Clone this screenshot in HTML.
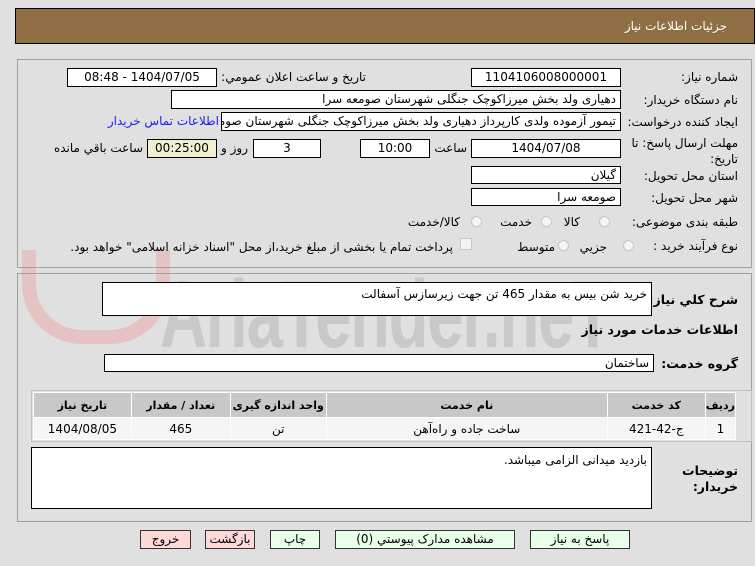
<!DOCTYPE html>
<html><head><meta charset="utf-8"><style>
body{margin:0;width:755px;height:566px;background:#e0e0e0;position:relative;overflow:hidden;font-family:"DejaVu Sans","Liberation Sans",sans-serif;font-size:12px;color:#000}
.a{position:absolute;white-space:nowrap}
.in{position:absolute;background:#fff;border:1px solid #000;box-sizing:border-box;direction:rtl;padding:0 4px;line-height:16px;overflow:hidden;white-space:nowrap}
.c{text-align:center}
.l{position:absolute;direction:rtl;white-space:nowrap}
.b{font-weight:bold;font-size:12.5px}
.panel{position:absolute;border:1px solid #a0a0a0;box-sizing:border-box}
.rad{position:absolute;width:11px;height:11px;border-radius:50%;border:1px solid #c8c8c8;background:#f4f4f4;box-sizing:border-box}
.btn{position:absolute;border:1px solid #333;box-sizing:border-box;text-align:center;line-height:17px;font-size:12px}
td{border:1px solid #fff;padding:0;text-align:center}
</style></head><body>
<div class="a" style="left:0;top:250px;width:755px;height:120px;overflow:hidden">
<div class="a" style="left:160px;top:10px;font-size:96px;line-height:110px;font-weight:bold;color:#c6c6c6;letter-spacing:-2px;font-family:'Liberation Sans',sans-serif;transform:scaleX(0.68);transform-origin:top left;opacity:.85">AriaTender.neT</div>
</div>
<div class="a" style="left:22px;top:250px;width:120px;height:80px;border:14px solid #e8b7b7;border-top:none;border-radius:0 0 60px 60px;opacity:.7"></div>

<div class="a" style="left:15px;top:8px;width:740px;height:36px;background:#8e6e42;border:1px solid #000;box-sizing:border-box"></div>
<div class="l" style="right:28px;top:19px;color:#fff;font-size:12px">جزئیات اطلاعات نیاز</div>

<div class="panel" style="left:17px;top:59px;width:735px;height:209px"></div>
<div class="l" style="right:17px;top:70px">شماره نیاز:</div>
<div class="in c" style="left:471px;top:68px;width:150px;height:19px">1104106008000001</div>
<div class="l" style="right:389px;top:70px">تاریخ و ساعت اعلان عمومي:</div>
<div class="in c" style="left:67px;top:68px;width:150px;height:19px">1404/07/05 - 08:48</div>
<div class="l" style="right:17px;top:93px">نام دستگاه خریدار:</div>
<div class="in" style="left:171px;top:90px;width:450px;height:19px">دهیاری ولد بخش میرزاکوچک جنگلی شهرستان صومعه سرا</div>
<div class="l" style="right:17px;top:115px">ایجاد کننده درخواست:</div>
<div class="in" style="left:221px;top:112px;width:400px;height:19px">تیمور آزموده ولدی کارپرداز دهیاری ولد بخش میرزاکوچک جنگلی شهرستان صومعه سرا</div>
<div class="l" style="right:536px;top:114px;color:#1a1aff">اطلاعات تماس خریدار</div>
<div class="l" style="right:17px;top:136px">مهلت ارسال پاسخ: تا</div>
<div class="l" style="right:17px;top:152px">تاریخ:</div>
<div class="in c" style="left:471px;top:139px;width:150px;height:19px">1404/07/08</div>
<div class="l" style="right:288px;top:141px">ساعت</div>
<div class="in c" style="left:360px;top:139px;width:70px;height:19px">10:00</div>
<div class="in c" style="left:253px;top:139px;width:68px;height:19px">3</div>
<div class="l" style="right:507px;top:141px">روز و</div>
<div class="in c" style="left:147px;top:139px;width:70px;height:19px;background:#f0f0d0">00:25:00</div>
<div class="l" style="right:612px;top:141px">ساعت باقي مانده</div>
<div class="l" style="right:17px;top:169px">استان محل تحویل:</div>
<div class="in" style="left:471px;top:166px;width:150px;height:18px">گیلان</div>
<div class="l" style="right:17px;top:191px">شهر محل تحویل:</div>
<div class="in" style="left:471px;top:188px;width:150px;height:18px">صومعه سرا</div>
<div class="l" style="right:17px;top:215px">طبقه بندی موضوعی:</div>
<div class="rad" style="left:599px;top:216px"></div><div class="l" style="right:175px;top:215px">کالا</div>
<div class="rad" style="left:541px;top:216px"></div><div class="l" style="right:223px;top:215px">خدمت</div>
<div class="rad" style="left:471px;top:216px"></div><div class="l" style="right:295px;top:215px">کالا/خدمت</div>
<div class="l" style="right:17px;top:239px">نوع فرآیند خرید :</div>
<div class="rad" style="left:623px;top:240px"></div><div class="l" style="right:148px;top:240px">جزیي</div>
<div class="rad" style="left:558px;top:240px"></div><div class="l" style="right:200px;top:240px">متوسط</div>
<div class="a" style="left:460px;top:238px;width:12px;height:12px;border:1px solid #c8c8c8;background:#f4f4f4;box-sizing:border-box"></div>
<div class="l" style="right:302px;top:240px">پرداخت تمام یا بخشی از مبلغ خرید،از محل "اسناد خزانه اسلامی" خواهد بود.</div>

<div class="panel" style="left:17px;top:273px;width:735px;height:249px"></div>
<div class="l b" style="right:17px;top:292px">شرح کلي نیاز:</div>
<div class="in" style="left:102px;top:282px;width:550px;height:34px;line-height:22px">خرید شن بیس به مقدار 465 تن جهت زیرسازس آسفالت</div>
<div class="l b" style="right:17px;top:322px">اطلاعات خدمات مورد نیاز</div>
<div class="l b" style="right:17px;top:356px">گروه خدمت:</div>
<div class="in" style="left:104px;top:354px;width:550px;height:18px">ساختمان</div>
<div class="a" style="left:31px;top:390px;width:721px;height:52px;border:1px solid #c0c0c0;box-sizing:border-box"></div>
<table style="position:absolute;left:33px;top:392px;width:703px;border-collapse:collapse;direction:rtl;font-size:11px">
<tr style="background:#c8c8c8;font-weight:bold;height:25px"><td style="width:26px">ردیف</td><td style="width:97px">کد خدمت</td><td style="width:280px">نام خدمت</td><td style="width:95px">واحد اندازه گیری</td><td style="width:98px">تعداد / مقدار</td><td>تاریخ نیاز</td></tr>
<tr style="background:#f5f5f5;height:22px;font-size:12px"><td>1</td><td>ج-42-421</td><td>ساخت جاده و راه‌آهن</td><td>تن</td><td>465</td><td>1404/08/05</td></tr>
</table>
<div class="l b" style="right:17px;top:463px">توضیحات</div>
<div class="l b" style="right:17px;top:479px">خریدار:</div>
<div class="in" style="left:31px;top:447px;width:621px;height:62px;line-height:24px">بازدید میدانی الزامی میباشد.</div>

<div class="btn" style="left:140px;top:530px;width:51px;height:19px;background:#ffd8d8">خروج</div>
<div class="btn" style="left:205px;top:530px;width:50px;height:19px;background:#ffd8d8">بازگشت</div>
<div class="btn" style="left:270px;top:530px;width:50px;height:19px;background:#e8ffe8">چاپ</div>
<div class="btn" style="left:335px;top:530px;width:180px;height:19px;background:#e8ffe8">مشاهده مدارک پیوستي (0)</div>
<div class="btn" style="left:530px;top:530px;width:100px;height:19px;background:#e8ffe8">پاسخ به نیاز</div>
</body></html>
